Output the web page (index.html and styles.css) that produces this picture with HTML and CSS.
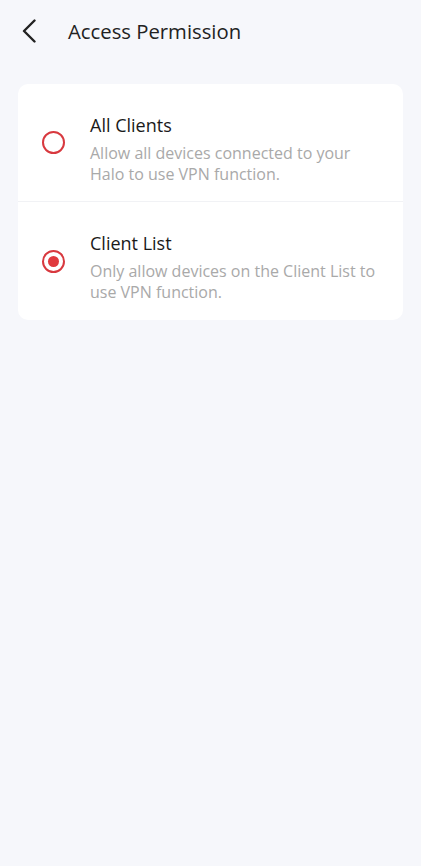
FILE: index.html
```html
<!DOCTYPE html>
<html lang="en">
<head>
<meta charset="utf-8">
<title>Access Permission</title>
<link rel="stylesheet" href="styles.css">
</head>
<body>
<header class="topbar">
  <button class="back" aria-label="Back">
    <svg width="16" height="24" viewBox="0 0 16 24"><path d="M13.5 1.5 L3 12 L13.5 22.5" fill="none" stroke="#222" stroke-width="2.4" stroke-linecap="round" stroke-linejoin="round"/></svg>
  </button>
  <h1 class="title">Access Permission</h1>
</header>
<main class="content">
  <section class="card">
    <div class="option">
      <span class="radio"></span>
      <div class="text">
        <div class="opt-title">All Clients</div>
        <div class="opt-desc">Allow all devices connected to your Halo to use VPN function.</div>
      </div>
    </div>
    <div class="option">
      <span class="radio checked"></span>
      <div class="text">
        <div class="opt-title">Client List</div>
        <div class="opt-desc">Only allow devices on the Client List to use VPN function.</div>
      </div>
    </div>
  </section>
</main>
</body>
</html>
```
FILE: styles.css
```css
html, body {
  margin: 0;
  padding: 0;
}
body {
  background: #f6f7fb;
  font-family: "Open Sans", "Noto Sans", sans-serif;
  color: #1f1f1f;
  min-height: 866px;
}
.topbar {
  display: flex;
  align-items: center;
  height: 62px;
  padding-left: 21px;
}
.back {
  background: none;
  border: 0;
  padding: 0;
  width: 16px;
  height: 24px;
  display: flex;
  align-items: center;
  justify-content: center;
  cursor: pointer;
}
.title {
  margin: 0 0 0 31px;
  font-size: 20.3px;
  font-weight: 400;
  color: #222;
  letter-spacing: 0;
}
.content {
  padding: 22px 18px 0 18px;
}
.card {
  background: #fff;
  border-radius: 10px;
  overflow: hidden;
}
.option {
  display: flex;
  align-items: center;
  padding: 0 20px 0 24px;
}
.option + .option {
  border-top: 1px solid #f1f2f5;
}
.radio {
  flex: none;
  width: 23px;
  height: 23px;
  box-sizing: border-box;
  border: 2.5px solid #d8393f;
  border-radius: 50%;
  display: flex;
  align-items: center;
  justify-content: center;
  margin-right: 25px;
}
.radio.checked::after {
  content: "";
  width: 11px;
  height: 11px;
  border-radius: 50%;
  background: #e0393e;
}
.text {
  flex: 1;
  padding: 29px 0 16px;
}
.option + .option .text {
  padding-bottom: 17px;
}
.opt-title {
  font-size: 18px;
  line-height: 24px;
  color: #1a1a1a;
  margin-bottom: 6px;
}
.opt-desc {
  font-size: 16px;
  line-height: 21px;
  color: #a9a9a9;
}
```
